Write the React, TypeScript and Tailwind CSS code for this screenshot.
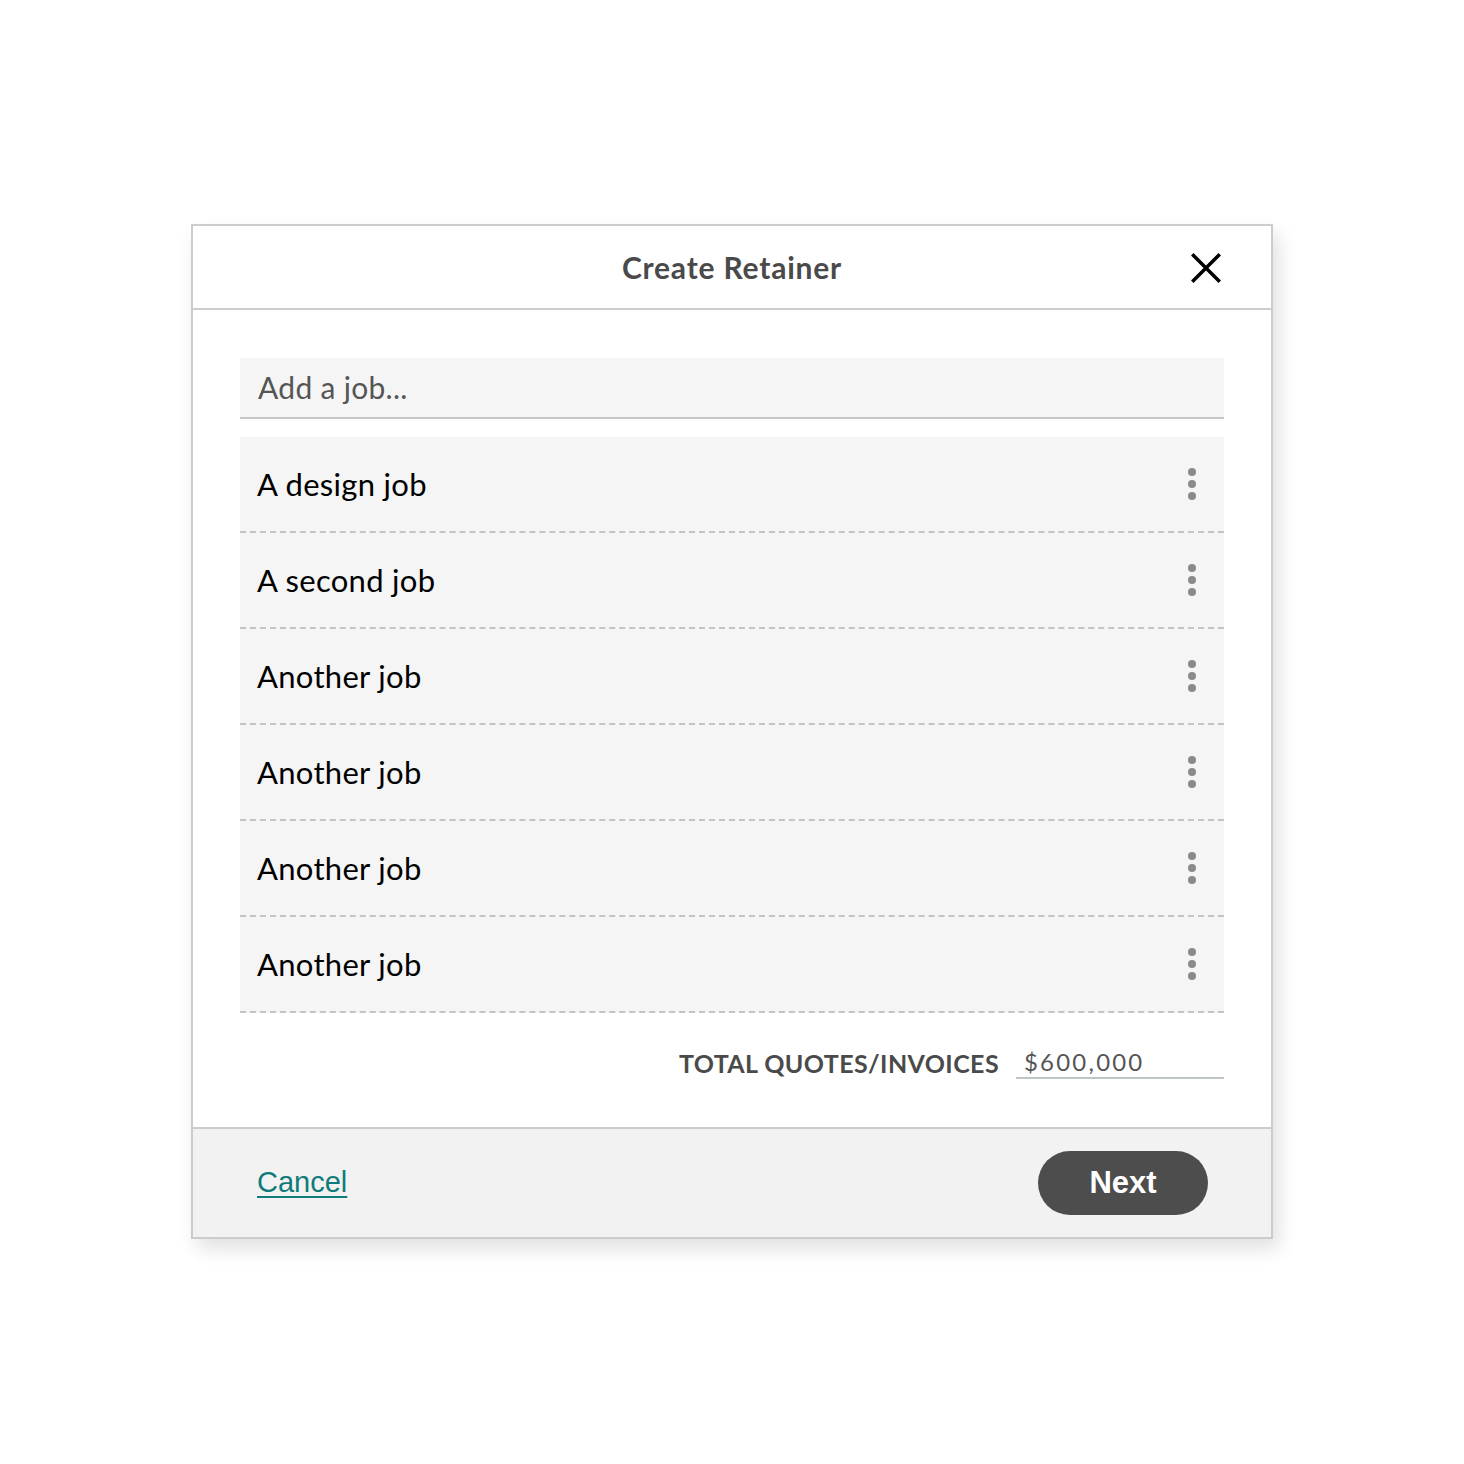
const jobs = ['A design job', 'A second job', 'Another job', 'Another job', 'Another job', 'Another job'];

function Dots() {
  return (
    <div className="flex flex-col items-center gap-[4px] mr-[28px]">
      <span className="w-[8px] h-[8px] rounded-full bg-[#8a8a8a]" />
      <span className="w-[8px] h-[8px] rounded-full bg-[#8a8a8a]" />
      <span className="w-[8px] h-[8px] rounded-full bg-[#8a8a8a]" />
    </div>
  );
}

export default function App() {
  return (
    <div className="w-[1464px] h-[1464px] bg-white pt-[224px] pl-[191px]">
      <div className="w-[1082px] border-2 border-[#cccccc] bg-white shadow-[6px_10px_18px_rgba(0,0,0,0.12)] font-['Lato',sans-serif]">
        <div className="relative h-[84px] border-b-2 border-[#cccccc] flex items-center justify-center">
          <h2 className="text-[30px] font-bold text-[#4a4a4a] tracking-[0.8px]">Create Retainer</h2>
          <button className="absolute right-[50px] top-[27px] text-black">
            <svg width="30" height="30" viewBox="0 0 30 30" fill="none" stroke="currentColor" strokeWidth="3.5" strokeLinecap="square">
              <path d="M2.5 2.5 L27.5 27.5 M27.5 2.5 L2.5 27.5" />
            </svg>
          </button>
        </div>

        <div className="px-[47px] pt-[48px] pb-[48px]">
          <div className="h-[61px] bg-[#f5f5f5] border-b-2 border-[#c4c8c8] flex items-center px-[18px]">
            <span className="text-[30px] text-[#555555] tracking-[0.3px]">Add a job...</span>
          </div>

          <div className="mt-[18px]">
            {jobs.map((job, i) => (
              <div
                key={i}
                className="h-[96px] bg-[#f5f5f5] border-b-2 border-dashed border-[#c4c4c4] flex items-center justify-between pl-[17px]"
              >
                <span className="text-[31px] text-black tracking-[0.3px]">{job}</span>
                <Dots />
              </div>
            ))}
          </div>

          <div className="mt-[34px] flex items-center justify-end gap-[17px]">
            <span className="text-[25px] font-bold text-[#4a4a4a] uppercase tracking-[0.4px] leading-[30px]">Total Quotes/Invoices</span>
            <div className="w-[208px] border-b-2 border-[#c0c6c6] pl-[8px]">
              <span className="block text-[24px] text-[#555555] tracking-[2.2px] leading-[30px]">$600,000</span>
            </div>
          </div>
        </div>

        <div className="h-[110px] bg-[#f2f2f2] border-t-2 border-[#cccccc] flex items-center justify-between pl-[64px] pr-[63px] font-['Liberation_Sans',sans-serif]">
          <a className="text-[29px] text-[#0f7b7a] underline underline-offset-[4px] decoration-[2px] cursor-pointer">Cancel</a>
          <button className="w-[170px] h-[64px] rounded-full bg-[#4d4d4d] text-white text-[31px] font-bold">Next</button>
        </div>
      </div>
    </div>
  );
}
